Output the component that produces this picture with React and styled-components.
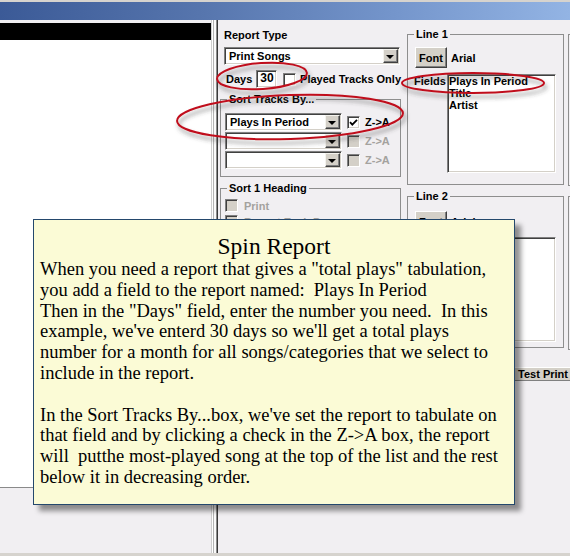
import React from 'react';
import styled, { createGlobalStyle } from 'styled-components';

const GlobalStyle = createGlobalStyle`
  html, body { margin: 0; padding: 0; background: #f1eff2; }
  body { font-family: "Liberation Sans", Arial, sans-serif; }
`;

const Window = styled.div`
  position: relative;
  width: 570px;
  height: 556px;
  overflow: hidden;
  background: #f1eff2;
  display: flex;
  flex-direction: column;
  font: bold 11px "Liberation Sans", Arial, sans-serif;
  color: #000;
`;

const TitleBar = styled.div`
  flex: none;
  height: 18px;
  border-top: 2px solid #d6d3ce;
  background: linear-gradient(90deg, #3b5a97 0%, #5675ad 35%, #7596cc 70%, #93b4e4 100%);
`;

const Main = styled.div`
  flex: 1;
  min-height: 0;
  display: flex;
`;

const StatusStrip = styled.div`
  flex: none;
  height: 3px;
  background: #d6d3ce;
`;

const LeftPane = styled.div`
  flex: none;
  width: 211px;
  padding-top: 3px;
  display: flex;
  flex-direction: column;
`;

const BlackBar = styled.div`
  height: 17px;
  background: #000;
`;

const TrackList = styled.div`
  height: 447px;
  background: #fff;
  border-bottom: 1px solid #8a8a8a;
`;

const Splitter = styled.div`
  flex: none;
  width: 9px;
  background: linear-gradient(90deg, #cfcfcf 0 1px, #fff 1px 2px, #b4b4b4 2px 3px, #fafafa 3px 5px, #8c8c8c 5px 6px, #3a3a3a 6px 7px, transparent 7px);
`;

const RightPane = styled.div`
  flex: 1;
  min-width: 0;
  display: flex;
  align-items: flex-start;
`;

const Column = styled.div`
  flex: none;
  width: ${p => p.$width}px;
  margin-left: ${p => p.$ml || 0}px;
  padding-top: ${p => p.$pt}px;
  display: flex;
  flex-direction: column;
`;

const SectionLabel = styled.div`
  height: 14px;
  line-height: 14px;
  padding-left: 4px;
  margin-bottom: 5px;
`;

const Sunken = styled.div`
  box-sizing: border-box;
  border: 1px solid;
  border-color: #808080 #fff #fff #808080;
  box-shadow: inset 1px 1px #404040, inset -1px -1px #d4d0c8;
  background: #fff;
`;

const Combo = styled(Sunken)`
  display: flex;
  width: ${p => p.$width}px;
  height: 18px;
  margin-left: ${p => p.$ml || 0}px;
  padding: 1px;
`;

const ComboText = styled.div`
  flex: 1;
  padding-left: 3px;
  line-height: 14px;
  white-space: nowrap;
  overflow: hidden;
`;

const DropButton = styled.div`
  flex: none;
  box-sizing: border-box;
  width: 15px;
  height: 14px;
  background: #d4d0c8;
  border: 1px solid;
  border-color: #f4f3ee #404040 #404040 #f4f3ee;
  box-shadow: inset -1px -1px #808080;
  display: flex;
  align-items: center;
  justify-content: center;
  &::after {
    content: '';
    border-left: 4px solid transparent;
    border-right: 4px solid transparent;
    border-top: 4px solid #000;
    margin: 1px 1px 0 0;
  }
`;

const InlineRow = styled.div`
  display: flex;
  align-items: center;
  height: ${p => p.$h || 18}px;
  gap: ${p => p.$gap || 4}px;
  padding-left: ${p => p.$pl || 0}px;
  margin-top: ${p => p.$mt || 0}px;
`;

const NumberBox = styled(Sunken)`
  width: 22px;
  height: 18px;
  padding-left: 3px;
  line-height: 15px;
  font-size: 12px;
`;

const CheckBox = styled(Sunken)`
  flex: none;
  width: 13px;
  height: 13px;
  margin-left: ${p => p.$ml || 0}px;
  background: ${p => (p.$disabled ? '#d4d0c8' : '#fff')};
  display: flex;
  align-items: center;
  justify-content: center;
`;

const Caption = styled.span`
  white-space: nowrap;
  color: ${p => (p.$disabled ? '#a4a29e' : '#000')};
`;

const Group = styled.fieldset`
  margin: ${p => p.$mt || 0}px 0 0 0;
  padding: ${p => p.$pt}px 0 ${p => p.$pb}px ${p => p.$pl || 4}px;
  border: 1px solid #8e8e8e;
  min-width: 0;
  box-sizing: border-box;
  display: flex;
  flex-direction: column;
  gap: ${p => p.$gap || 0}px;
`;

const Legend = styled.legend`
  padding: 0 2px;
  margin-left: ${p => p.$ml ?? 2}px;
  line-height: 14px;
  height: 14px;
`;

const Frame = styled.div`
  height: ${p => p.$h}px;
  margin-top: ${p => p.$mt}px;
  border: 1px solid #8e8e8e;
`;

const ButtonFace = styled.div`
  flex: none;
  box-sizing: border-box;
  width: ${p => p.$width}px;
  height: ${p => p.$height}px;
  background: #d4d0c8;
  border: 1px solid;
  border-color: #fff #404040 #404040 #fff;
  box-shadow: inset -1px -1px #808080;
  display: flex;
  align-items: center;
  justify-content: center;
  line-height: 12px;
`;

const FieldsRow = styled.div`
  display: flex;
  margin-top: ${p => p.$mt}px;
`;

const FieldsLabel = styled.div`
  width: 33px;
  margin-left: -1px;
  line-height: 14px;
`;

const ListBox = styled(Sunken)`
  width: 109px;
  height: ${p => p.$height}px;
  padding: 0 1px;
`;

const ListItem = styled.div`
  line-height: 12px;
  white-space: nowrap;
`;

const TestPrint = styled(ButtonFace)`
  margin: 19px 0 0 98px;
  border-color: #fff #808080 #808080 #fff;
  box-shadow: none;
`;

const Tooltip = styled.div`
  position: absolute;
  left: 33px;
  top: 219px;
  width: 482px;
  height: 286px;
  box-sizing: border-box;
  padding: 13px 6px 0 6px;
  background: #fbfbd6;
  border: 1px solid #24486c;
  box-shadow: 6px 6px 5px rgba(0, 0, 0, 0.42);
  font-family: "Liberation Serif", "Times New Roman", serif;
  font-weight: normal;
  color: #000;
`;

const TipTitle = styled.div`
  font-size: 23.5px;
  line-height: 26px;
  text-align: center;
`;

const TipBody = styled.div`
  font-size: 18.5px;
  line-height: 20.8px;
  white-space: pre;
`;

const Annotations = styled.svg`
  position: absolute;
  left: 0;
  top: 0;
  pointer-events: none;
`;

const tipText = `When you need a report that gives a "total plays" tabulation,
you add a field to the report named:  Plays In Period
Then in the "Days" field, enter the number you need.  In this
example, we've enterd 30 days so we'll get a total plays
number for a month for all songs/categories that we select to
include in the report.

In the Sort Tracks By...box, we've set the report to tabulate on
that field and by clicking a check in the Z->A box, the report
will  putthe most-played song at the top of the list and the rest
below it in decreasing order.`;

const sortRows = [
  { value: 'Plays In Period', checked: true, disabled: false },
  { value: '', checked: false, disabled: true },
  { value: '', checked: false, disabled: true },
];

const headingRows = ['Print', 'Repeat Each Page', 'New Page Each', 'Count'];

function Tick() {
  return (
    <svg width="9" height="9" viewBox="0 0 9 9">
      <path d="M1 4.2 L3.3 6.6 L8 1.8" fill="none" stroke="#000" strokeWidth="1.8" />
    </svg>
  );
}

function FontGroup({ title, mt, firstGap, listHeight, items, pb, fieldsGap }) {
  return (
    <Group $mt={mt} $pt={firstGap} $pb={pb} $pl={7}>
      <Legend $ml={-1}>{title}</Legend>
      <InlineRow $gap={4} $h={21}>
        <ButtonFace $width={32} $height={21}>Font</ButtonFace>
        <Caption>Arial</Caption>
      </InlineRow>
      <FieldsRow $mt={fieldsGap}>
        <FieldsLabel>Fields</FieldsLabel>
        <ListBox $height={listHeight}>
          {items.map(item => <ListItem key={item}>{item}</ListItem>)}
        </ListBox>
      </FieldsRow>
    </Group>
  );
}

export default function App() {
  return (
    <>
      <GlobalStyle />
      <Window>
        <TitleBar />
        <Main>
          <LeftPane>
            <BlackBar />
            <TrackList />
          </LeftPane>
          <Splitter />
          <RightPane>
            <Column $width={181} $pt={8}>
              <SectionLabel>Report Type</SectionLabel>
              <Combo $width={176} $ml={4}>
                <ComboText>Print Songs</ComboText>
                <DropButton />
              </Combo>
              <InlineRow $mt={5} $pl={6} $gap={4}>
                <Caption>Days</Caption>
                <NumberBox>30</NumberBox>
                <CheckBox $ml={2} />
                <Caption>Played Tracks Only</Caption>
              </InlineRow>
              <Group $mt={4} $pt={7} $pb={7} $gap={1}>
                <Legend>Sort Tracks By...</Legend>
                {sortRows.map((row, i) => (
                  <InlineRow key={i} $gap={5}>
                    <Combo $width={117}>
                      <ComboText>{row.value}</ComboText>
                      <DropButton />
                    </Combo>
                    <CheckBox $disabled={row.disabled}>{row.checked && <Tick />}</CheckBox>
                    <Caption $disabled={row.disabled}>Z-&gt;A</Caption>
                  </InlineRow>
                ))}
              </Group>
              <Group $mt={4} $pt={4} $pb={8} $gap={3}>
                <Legend>Sort 1 Heading</Legend>
                {headingRows.map(label => (
                  <InlineRow key={label} $gap={6} $h={13}>
                    <CheckBox $disabled />
                    <Caption $disabled>{label}</Caption>
                  </InlineRow>
                ))}
              </Group>
            </Column>
            <Column $width={157} $ml={6} $pt={7}>
              <FontGroup title="Line 1" firstGap={6} fieldsGap={6} listHeight={99} pb={11}
                items={['Plays In Period', 'Title', 'Artist']} />
              <FontGroup title="Line 2" mt={4} firstGap={8} fieldsGap={5} listHeight={105} pb={5}
                items={[]} />
              <TestPrint $width={76} $height={14}>Test Print</TestPrint>
            </Column>
            <Column $width={160} $ml={4} $pt={0}>
              <Frame $mt={14} $h={150} />
              <Frame $mt={10} $h={152} />
            </Column>
          </RightPane>
        </Main>
        <StatusStrip />

        <Tooltip>
          <TipTitle>Spin Report</TipTitle>
          <TipBody>{tipText}</TipBody>
        </Tooltip>

        <Annotations width="570" height="556" viewBox="0 0 570 556">
          <defs>
            <filter id="inkShadow" x="-20%" y="-40%" width="140%" height="190%">
              <feDropShadow dx="2" dy="4" stdDeviation="2" floodColor="#3a3a3a" floodOpacity="0.55" />
            </filter>
          </defs>
          <g fill="none" stroke="#c0101c" strokeWidth="2" filter="url(#inkShadow)">
            <ellipse cx="262" cy="76" rx="45" ry="13" transform="rotate(-4 262 76)" />
            <ellipse cx="290" cy="117" rx="113" ry="22" transform="rotate(-2 290 117)" />
            <ellipse cx="473" cy="83" rx="71" ry="10" />
          </g>
        </Annotations>
      </Window>
    </>
  );
}
